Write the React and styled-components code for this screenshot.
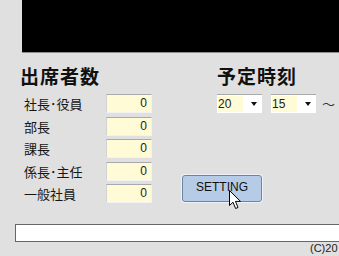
import styled, { createGlobalStyle } from "styled-components"

const GlobalStyle = createGlobalStyle`
html, body {
  margin:0;
  padding:0;
  background:#e0e0e0;
  overflow:hidden;
}
body {
  width:339px;
  height:256px;
  font-family:"Noto Sans CJK JP", "Liberation Sans", sans-serif;
}
`

const Page = styled.div`
width:420px;
height:256px;
position:relative;
background:#e0e0e0;
`

const Screen = styled.div`
margin-left:22px;
height:52px;
background:#000;
border-bottom:1px solid #8e8e8e;
`

const Main = styled.div`
display:flex;
height:170px;
`

const LeftCol = styled.div`
width:162px;
padding-left:20px;
padding-top:12px;
`

const RightCol = styled.div`
padding-top:12px;
display:flex;
flex-direction:column;
`

const Heading = styled.h1`
margin:0 0 7px ${p => p.indent || 0}px;
font-size:19px;
line-height:22px;
font-weight:bold;
color:#111;
letter-spacing:1px;
`

const Rows = styled.div`
display:flex;
flex-direction:column;
gap:3.5px;
padding-left:4px;
`

const Row = styled.div`
display:flex;
align-items:center;
height:19px;
`

const Label = styled.span`
width:82px;
font-size:13px;
color:#151515;
line-height:19px;
`

const NumBox = styled.div`
height:17px;
width:40px;
background:#fffbd6;
border-top:1px solid #a9a9a9;
border-left:1px solid #d2d2d2;
border-bottom:1px solid #f2f2f2;
border-right:1px solid #f2f2f2;
font-family:"Liberation Sans", Arial, sans-serif;
font-size:12px;
line-height:17px;
text-align:right;
padding-right:4px;
color:#222;
`

const TimeRow = styled.div`
display:flex;
align-items:center;
gap:9px;
padding-left:35px;
`

const Select = styled.div`
width:45px;
height:18px;
background:#fff;
border-top:1px solid #a9a9a9;
display:flex;
align-items:center;
`

const SelValue = styled.span`
width:25px;
height:16px;
margin-left:1px;
background:#fffbd6;
font-family:"Liberation Sans", Arial, sans-serif;
font-size:12px;
line-height:16px;
color:#222;
`

const Caret = styled.span`
margin-left:auto;
margin-right:5px;
width:0;
height:0;
border-left:3.5px solid transparent;
border-right:3.5px solid transparent;
border-top:4px solid #111;
`

const Tilde = styled.span`
font-size:13px;
color:#333;
margin-left:-3px;
`

const Button = styled.button`
margin-top:62px;
width:80px;
height:27px;
background:#b6cbe5;
border:1px solid #6c84a2;
border-radius:3px;
box-shadow:0 0 0 1px #eef2f8;
font-family:"Liberation Sans", Arial, sans-serif;
font-size:12px;
color:#111;
padding:0 0 3px;
cursor:pointer;
`

const ButtonWrap = styled.div`
position:relative;
align-self:flex-start;
`

const Cursor = styled.svg`
position:absolute;
left:47px;
top:77px;
`

const Footer = styled.div`
padding-left:15px;
padding-top:1px;
`

const Bar = styled.div`
height:16px;
background:#fff;
border:1px solid #666;
border-right:none;
`

const Copy = styled.div`
padding-left:295px;
font-family:"Liberation Sans", Arial, sans-serif;
font-size:11px;
line-height:13px;
color:#222;
`

const members = ["社長･役員", "部長", "課長", "係長･主任", "一般社員"]

export default function App() {
  return (
    <Page>
      <GlobalStyle />
      <Screen />
      <Main>
        <LeftCol>
          <Heading>出席者数</Heading>
          <Rows>
            {members.map(m => (
              <Row key={m}>
                <Label>{m}</Label>
                <NumBox>0</NumBox>
              </Row>
            ))}
          </Rows>
        </LeftCol>
        <RightCol>
          <Heading indent={35}>予定時刻</Heading>
          <TimeRow>
            <Select><SelValue>20</SelValue><Caret /></Select>
            <Select><SelValue>15</SelValue><Caret /></Select>
            <Tilde>～</Tilde>
          </TimeRow>
          <ButtonWrap>
            <Button>SETTING</Button>
            <Cursor width="13" height="20" viewBox="0 0 13 20">
              <path d="M0.5 0.5 L0.5 15.5 L4 12.2 L6.6 18.5 L9 17.5 L6.5 11.4 L11.5 11.4 Z" fill="#fff" stroke="#000" strokeWidth="1" />
            </Cursor>
          </ButtonWrap>
        </RightCol>
      </Main>
      <Footer>
        <Bar />
        <Copy>(C)20</Copy>
      </Footer>
    </Page>
  )
}
